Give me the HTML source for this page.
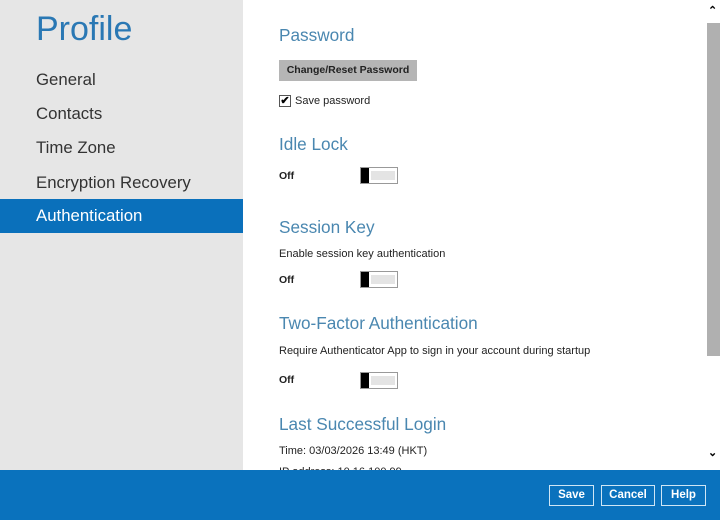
<!DOCTYPE html>
<html><head><style>
*{margin:0;padding:0;box-sizing:border-box}
body{width:720px;height:520px;overflow:hidden;font-family:"Liberation Sans",sans-serif;background:#fff;position:relative}
.side{position:absolute;left:0;top:0;width:243px;height:470px;background:#e6e6e6}
.side h1{position:absolute;left:36px;top:10px;font-size:34px;font-weight:normal;color:#2a78b4}
.item{position:absolute;left:0;width:243px;height:34px;line-height:34px;padding-left:36px;font-size:16.8px;color:#333}
.item.act{background:#0a70bb;color:#fff}
.h{position:absolute;left:279px;font-size:17.2px;color:#4a87b0}
.t{position:absolute;left:279px;font-size:11px;color:#222}
.off{position:absolute;left:279px;font-size:10.5px;font-weight:bold;color:#222}
.sw{position:absolute;left:360px;width:38px;height:17px;border:1px solid #999;background:#fff}
.sw:before{content:"";position:absolute;left:0;top:0;width:8px;height:15px;background:#000}
.sw:after{content:"";position:absolute;left:10px;top:3px;width:24px;height:9px;background:#e4e4e4}
.foot{position:absolute;left:0;top:470px;width:720px;height:50px;background:#0a72bd}
.b{position:absolute;top:15px;height:21px;border:1px solid #cfe6f5;color:#fff;font-size:11.5px;font-weight:bold;text-align:center;line-height:19px}
</style></head><body>
<div class="side">
<h1>Profile</h1>
<div class="item" style="top:63px">General</div>
<div class="item" style="top:97px">Contacts</div>
<div class="item" style="top:131px">Time Zone</div>
<div class="item" style="top:166px">Encryption Recovery</div>
<div class="item act" style="top:199px">Authentication</div>
</div>
<div class="h" style="top:25px">Password</div>
<div style="position:absolute;left:279px;top:60px;width:138px;height:21px;background:#b5b5b5;font-size:10.5px;font-weight:bold;color:#222;text-align:center;line-height:21px">Change/Reset Password</div>
<div style="position:absolute;left:279px;top:95px;width:12px;height:12px;border:1px solid #555;font-size:11px;line-height:10px;text-align:center;font-weight:bold">✔</div>
<div class="t" style="left:295px;top:95px">Save password</div>
<div class="h" style="top:134px">Idle Lock</div>
<div class="off" style="top:170px">Off</div><div class="sw" style="top:167px"></div>
<div class="h" style="top:217px">Session Key</div>
<div class="t" style="top:248px">Enable session key authentication</div>
<div class="off" style="top:274px">Off</div><div class="sw" style="top:271px"></div>
<div class="h" style="top:313px">Two-Factor Authentication</div>
<div class="t" style="top:345px">Require Authenticator App to sign in your account during startup</div>
<div class="off" style="top:374px">Off</div><div class="sw" style="top:372px"></div>
<div class="h" style="top:414px">Last Successful Login</div>
<div class="t" style="top:445px">Time: 03/03/2026 13:49 (HKT)</div>
<div class="t" style="top:466px">IP address: 10.16.100.99</div>
<div style="position:absolute;left:707px;top:23px;width:13px;height:333px;background:#b0b0b0"></div>
<div style="position:absolute;left:708px;top:4px;font-size:11px;font-weight:bold">&#8963;</div>
<div style="position:absolute;left:708px;top:446px;font-size:11px;font-weight:bold">&#8964;</div>
<div class="foot">
<div class="b" style="left:549px;width:45px">Save</div>
<div class="b" style="left:601px;width:54px">Cancel</div>
<div class="b" style="left:661px;width:45px">Help</div>
</div>
</body></html>
